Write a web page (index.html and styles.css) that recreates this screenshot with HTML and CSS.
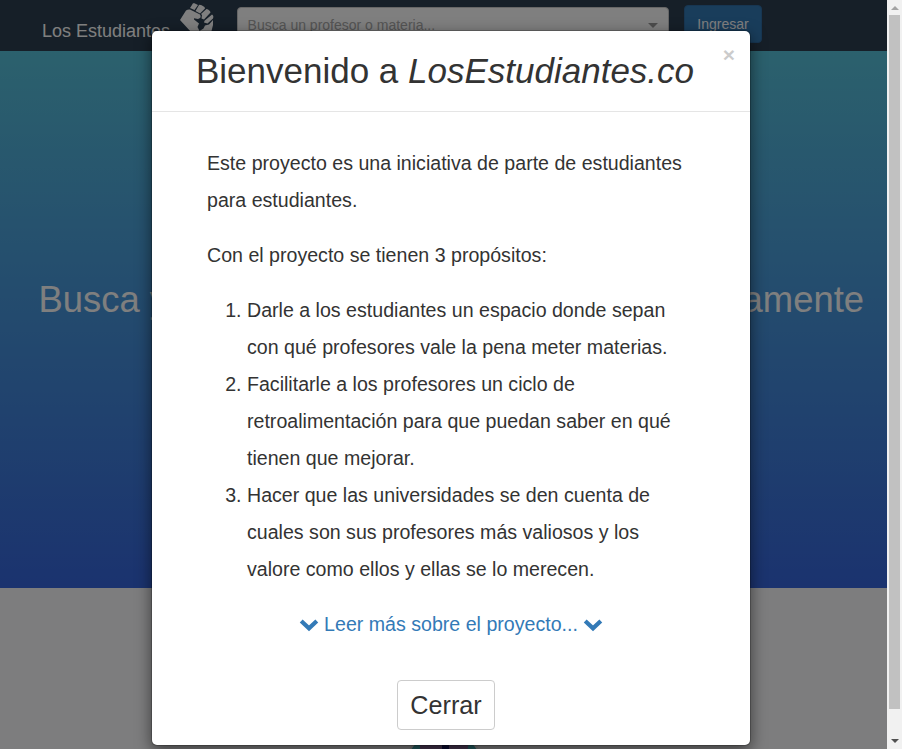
FILE: index.html
```html
<!DOCTYPE html>
<html lang="es">
<head>
<meta charset="utf-8">
<title>Los Estudiantes</title>
<link rel="stylesheet" href="styles.css">
</head>
<body>
<div class="page">
  <header class="navbar">
    <span class="brand">Los Estudiantes</span>
    <svg class="fist" viewBox="0 0 36 40" width="36" height="40" fill="#fff">
      <path d="M1 20 L7 10.5 Q9 9 11 9.5 L17 12.5 L21 14.5 Q23 18 19 19 L15 18.2 L15 19.5 L20 23.5 L18.5 27 L20.5 31 L24.5 28.5 L26 25.5 L30 24.5 L34 20 L34 25 L32 33 L32 40 L12 40 L12 32 Z"/>
      <path d="M12 6.5 L14 3.2 L15.5 3.2 L19 5 L15.5 10 L11 8 Z M20 5 Q21 4 25.5 7 L26 8.5 L21 13.5 L16.5 11 Z M27.5 9 Q31 10 31.5 12.5 L25 19.5 L22.5 18.5 L23 15 L22 14 Z M33 14.5 Q35 15.5 34 18.5 L28.5 23.5 L25 22.5 L25.5 20.8 Z"/>
    </svg>
    <div class="search"><span>Busca un profesor o materia...</span><i class="caret"></i></div>
    <button class="login">Ingresar</button>
  </header>
  <section class="hero"><h1><span>Busca y califica</span><span>profesores anónimamente</span></h1></section>
  <section class="features"><svg class="emblem" width="80" height="80" viewBox="0 0 80 80"><circle cx="40" cy="40" r="39" fill="#45b5bc" stroke="#eee" stroke-width="2"/><path d="M15 8H65L60 60H20Z" fill="#8a6b9c"/><path d="M38 0H45V60H38Z" fill="#141460"/></svg></section>
</div>
<div class="backdrop">
  <div class="modal">
    <div class="modal-header">
      <button class="close">×</button>
      <h2>Bienvenido a <em>LosEstudiantes.co</em></h2>
    </div>
    <div class="modal-body">
      <p>Este proyecto es una iniciativa de parte de estudiantes para estudiantes.</p>
      <p>Con el proyecto se tienen 3 propósitos:</p>
      <ol>
        <li>Darle a los estudiantes un espacio donde sepan con qué profesores vale la pena meter materias.</li>
        <li>Facilitarle a los profesores un ciclo de retroalimentación para que puedan saber en qué tienen que mejorar.</li>
        <li>Hacer que las universidades se den cuenta de cuales son sus profesores más valiosos y los valore como ellos y ellas se lo merecen.</li>
      </ol>
      <a class="more"><svg class="chevron" viewBox="0 0 20 14"><path d="M2.2 3 L10 10.3 L17.8 3"/></svg><span>Leer más sobre el proyecto...</span><svg class="chevron" viewBox="0 0 20 14"><path d="M2.2 3 L10 10.3 L17.8 3"/></svg></a>
    </div>
    <div class="modal-footer"><button class="dismiss">Cerrar</button></div>
  </div>
</div>
<div class="scrollbar"><i class="arrow up"></i><i class="thumb"></i><i class="arrow down"></i></div>
</body>
</html>
```
FILE: styles.css
```css
* { box-sizing: border-box; }
body { margin: 0; height: 749px; overflow: hidden; color: #333; font-family: "Liberation Sans", Arial, sans-serif; }
button { font-family: inherit; }
.page { width: 887px; height: 749px; overflow: hidden; }
.navbar { display: flex; align-items: flex-start; height: 51px; padding-left: 42px; background: #2c3e50; }
.brand { width: 137px; padding-top: 21px; font-size: 18px; line-height: 20px; color: #fff; white-space: nowrap; }
.fist { flex: none; }
.search { display: flex; justify-content: space-between; align-items: center; width: 432px; height: 36px; margin: 7px 0 0 22px; padding: 0 10px 0 9.6px; border: 1px solid #ccc; border-radius: 4px; background: #fff; color: #aaa; font-size: 14px; }
.caret { border: 5px solid transparent; border-top-color: #999; border-bottom: 0; }
.login { width: 78px; height: 38px; margin: 5px 0 0 15px; padding: 0; border: 1px solid #2e6da4; border-radius: 4px; background: #337ab7; color: #fff; font-size: 14px; }
.hero { height: 537px; padding: 228px 23px 0 38.5px; background: linear-gradient(#57c2db, #3666de); }
.hero h1 { display: flex; justify-content: space-between; margin: 0; color: #fff; font-size: 36.4px; font-weight: 400; line-height: 42px; white-space: nowrap; }
.features { display: flex; justify-content: center; height: 161px; padding-top: 141px; background: #fafbfc; }
.emblem { flex: none; }
.backdrop { position: absolute; top: 0; left: 0; width: 887px; height: 749px; padding: 30px 0 0 151px; background: rgba(0,0,0,.5); }
.modal { width: 600px; height: 716px; border: 1px solid rgba(0,0,0,.2); border-radius: 6px; background: #fff; background-clip: padding-box; box-shadow: 0 5px 15px rgba(0,0,0,.5); }
.modal-header { position: relative; height: 81px; padding-top: 20px; border-bottom: 1px solid #e5e5e5; }
.modal-header h2 { margin: 0; padding-right: 12px; text-align: center; font-size: 35px; font-weight: 400; line-height: 40px; white-space: nowrap; }
.close { position: absolute; top: 13px; right: 15px; padding: 0; border: 0; background: none; color: #000; opacity: .2; font-size: 21px; font-weight: 700; line-height: 21px; }
.modal-body { height: 531px; padding: 33px 55px 0; font-size: 19.6px; line-height: 37px; }
.modal-body p { margin: 0 0 18px; }
.modal-body ol { margin: 0 0 18px; padding-left: 40px; }
.more { display: flex; justify-content: center; align-items: center; height: 37px; color: #337ab7; }
.more span { margin: 0 5px; white-space: nowrap; }
.chevron { width: 20px; height: 14px; margin-top: 1px; fill: none; stroke: #337ab7; stroke-width: 4.2; }
.modal-footer { display: flex; justify-content: center; padding: 37px 10px 0 0; }
.dismiss { width: 98px; height: 50px; padding: 0; border: 1px solid #ccc; border-radius: 4px; background: #fff; color: #333; font-size: 25.2px; }
.scrollbar { position: absolute; top: 0; right: 0; display: flex; flex-direction: column; align-items: center; width: 15px; height: 749px; background: #f1f1f1; }
.arrow { border: 4px solid transparent; }
.up { margin-top: 6px; border-top: 0; border-bottom-color: #a3a3a3; }
.thumb { width: 11px; height: 694px; margin-top: 5px; background: #c1c1c1; }
.down { margin-top: 30px; border-bottom: 0; border-top-color: #505050; }
```
